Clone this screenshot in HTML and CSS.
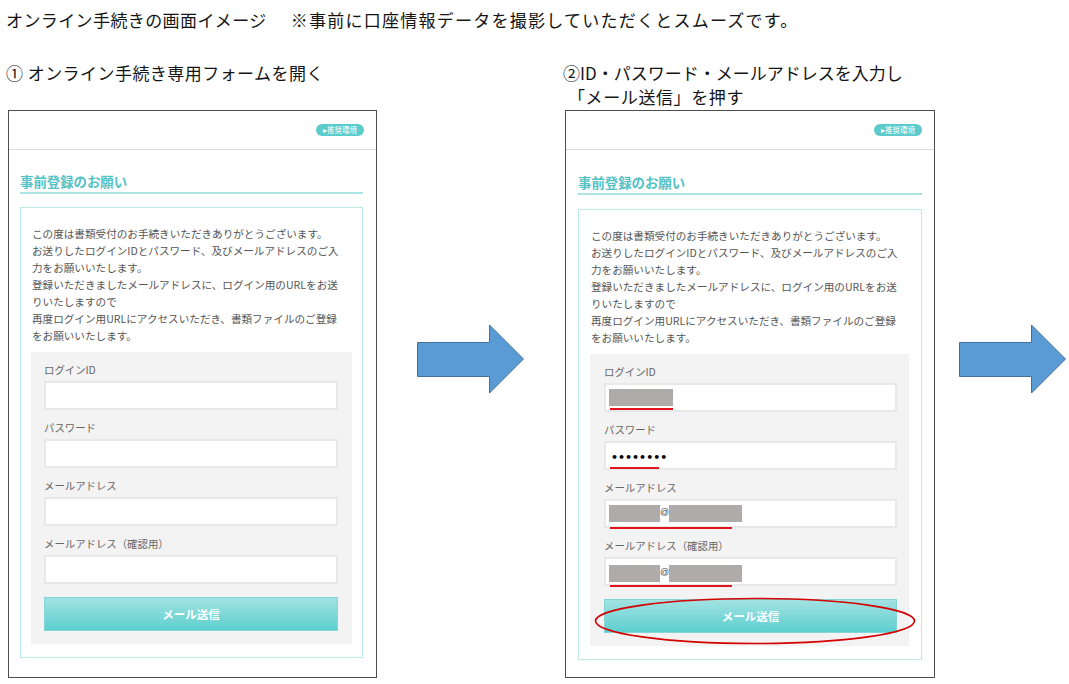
FILE: index.html
```html
<!DOCTYPE html>
<html lang="ja">
<head>
<meta charset="utf-8">
<title>オンライン手続きの画面イメージ</title>
<link rel="stylesheet" href="styles.css">
</head>
<body>
<p class="title"><span class="title-main">オンライン手続きの画面イメージ</span><span class="title-note">※事前に口座情報データを撮影していただくとスムーズです。</span></p>
<div class="steps">
  <section class="step step--one">
    <h2 class="step-head">① オンライン手続き専用フォームを開く</h2>
    <div class="phone">
      <div class="phone-bar"><span class="badge">▸推奨環境</span></div>
      <div class="phone-body">
        <h3 class="reg-title">事前登録のお願い</h3>
        <div class="reg-box">
          <p class="reg-text">この度は書類受付のお手続きいただきありがとうございます。<br>お送りしたログインIDとパスワード、及びメールアドレスのご入<br>力をお願いいたします。<br>登録いただきましたメールアドレスに、ログイン用のURLをお送<br>りいたしますので<br>再度ログイン用URLにアクセスいただき、書類ファイルのご登録<br>をお願いいたします。</p>
          <div class="form">
            <span class="f-label">ログインID</span>
            <div class="f-input"></div>
            <span class="f-label">パスワード</span>
            <div class="f-input"></div>
            <span class="f-label">メールアドレス</span>
            <div class="f-input"></div>
            <span class="f-label">メールアドレス（確認用）</span>
            <div class="f-input"></div>
            <div class="f-button">メール送信</div>
          </div>
        </div>
      </div>
    </div>
  </section>

  <div class="arrow arrow--one">
    <svg width="108" height="70" viewBox="0 0 108 70"><path d="M0.5 18.5 H72.5 V1 L106.5 35 L72.5 69 V52.5 H0.5 Z" fill="#5b9bd5" stroke="#41719c" stroke-width="1"/></svg>
  </div>

  <section class="step step--two">
    <h2 class="step-head">②ID・パスワード・メールアドレスを入力し<br><span class="step-sub">「メール送信」を押す</span></h2>
    <div class="phone phone--wide">
      <div class="phone-bar"><span class="badge">▸推奨環境</span></div>
      <div class="phone-body">
        <h3 class="reg-title">事前登録のお願い</h3>
        <div class="reg-box">
          <p class="reg-text">この度は書類受付のお手続きいただきありがとうございます。<br>お送りしたログインIDとパスワード、及びメールアドレスのご入<br>力をお願いいたします。<br>登録いただきましたメールアドレスに、ログイン用のURLをお送<br>りいたしますので<br>再度ログイン用URLにアクセスいただき、書類ファイルのご登録<br>をお願いいたします。</p>
          <div class="form">
            <span class="f-label">ログインID</span>
            <div class="f-input f-input--filled">
              <span class="mask mask--id"></span>
              <span class="mark mark--id"></span>
            </div>
            <span class="f-label">パスワード</span>
            <div class="f-input f-input--filled">
              <span class="dots">••••••••</span>
              <span class="mark mark--pw"></span>
            </div>
            <span class="f-label">メールアドレス</span>
            <div class="f-input f-input--filled">
              <span class="mask mask--user"></span><span class="at">@</span><span class="mask mask--domain"></span>
              <span class="mark mark--mail"></span>
            </div>
            <span class="f-label">メールアドレス（確認用）</span>
            <div class="f-input f-input--filled f-input--low">
              <span class="mask mask--user"></span><span class="at">@</span><span class="mask mask--domain"></span>
              <span class="mark mark--mail"></span>
            </div>
            <div class="f-button">メール送信
              <svg class="ring" width="322" height="48" viewBox="0 0 322 48"><ellipse cx="161" cy="24" rx="159.5" ry="22.5" fill="none" stroke="#d40000" stroke-width="1.6"/></svg>
            </div>
          </div>
        </div>
      </div>
    </div>
  </section>

  <div class="arrow arrow--two">
    <svg width="108" height="70" viewBox="0 0 108 70"><path d="M0.5 18.5 H72.5 V1 L106.5 35 L72.5 69 V52.5 H0.5 Z" fill="#5b9bd5" stroke="#41719c" stroke-width="1"/></svg>
  </div>
</div>
</body>
</html>
```

FILE: styles.css
```css
html, body {
  background: #ffffff;
}

body {
  margin: 0;
  padding: 8px 0 0 6px;
  font-family: "Noto Sans CJK JP", "Noto Sans", sans-serif;
  color: #141414;
}

.title {
  margin: 0 0 29px;
  font-size: 17px;
  line-height: 24px;
  white-space: nowrap;
}

.title-main {
  letter-spacing: 0.4px;
}

.title-note {
  margin-left: 24px;
  letter-spacing: 1.25px;
}

.steps {
  display: flex;
  align-items: flex-start;
}

.step {
  flex: none;
}

.step--one {
  width: 371px;
}

.step--two {
  width: 372px;
}

.step-head {
  margin: 0 0 1px;
  height: 48px;
  font-size: 17px;
  line-height: 24px;
  font-weight: 400;
  white-space: nowrap;
}

.step--one .step-head {
  letter-spacing: 0.45px;
}

.step-sub {
  margin-left: 5px;
  letter-spacing: 0.6px;
}

.arrow {
  flex: none;
  margin-top: 263px;
  line-height: 0;
}

.arrow--one {
  margin-left: 40px;
  margin-right: 38px;
}

.arrow--two {
  margin-left: 24px;
}

/* phone screenshot */
.phone {
  margin-left: 2px;
  width: 369px;
  box-sizing: border-box;
  border: 1px solid #4d4d4d;
  padding-bottom: 19px;
  background: #fff;
}

.phone--wide {
  width: 370px;
  padding-bottom: 17px;
}

.phone-bar {
  height: 38px;
  border-bottom: 1px solid #dcdcdc;
  display: flex;
  align-items: center;
  justify-content: flex-end;
  padding-right: 12px;
}

.badge {
  width: 48px;
  height: 12px;
  border-radius: 6px;
  background: #5ccbcb;
  color: #fff;
  font-size: 7.5px;
  line-height: 12px;
  text-align: center;
}

.phone-body {
  padding-left: 11px;
}

.phone--wide .phone-body {
  padding-left: 12px;
}

.reg-title {
  width: 343px;
  margin: 0;
  padding: 22px 0 2px;
  font-size: 13.4px;
  line-height: 18px;
  font-weight: 700;
  color: #55c2c6;
  border-bottom: 2px solid #aee3e4;
}

.phone--wide .reg-title {
  width: 344px;
  padding-top: 23px;
}

.reg-box {
  width: 343px;
  box-sizing: border-box;
  margin-top: 13px;
  border: 1px solid #bfe8e9;
  padding: 17px 10px 13px;
}

.phone--wide .reg-box {
  width: 344px;
  margin-top: 14px;
  padding: 17px 12px 13px 11px;
}

.reg-text {
  margin: 0 0 8px 1px;
  font-size: 10.6px;
  line-height: 17px;
  color: #555;
  white-space: nowrap;
}

.form {
  background: #f3f3f3;
  padding: 10px 14px 13px 13px;
}

.phone--wide .form {
  padding: 10px 12px 13px 14px;
}

.f-label {
  display: block;
  margin-bottom: 3px;
  font-size: 10.4px;
  line-height: 16px;
  color: #666;
}

.f-input {
  position: relative;
  height: 29px;
  box-sizing: border-box;
  border: 2px solid #e8e8e8;
  background: #fff;
  margin-bottom: 10px;
}

.f-input--filled {
  display: flex;
  align-items: flex-start;
  padding: 4px 0 0 3px;
}

.f-input--low {
  padding-top: 6px;
}

.mask {
  display: block;
  height: 17px;
  background: #afabaa;
}

.mask--id {
  width: 64px;
}

.mask--user {
  width: 51px;
}

.mask--domain {
  width: 73px;
}

.at {
  width: 9px;
  font-family: "Liberation Sans", sans-serif;
  font-size: 9px;
  line-height: 15px;
  color: #444;
  text-align: center;
}

.dots {
  font-family: "DejaVu Sans", sans-serif;
  font-size: 11px;
  line-height: 21px;
  font-weight: 700;
  color: #000;
  padding-left: 2px;
}

/* red annotation underlines */
.mark {
  position: absolute;
  left: 4px;
  height: 2px;
  background: #e0141a;
}

.mark--id {
  top: 23px;
  width: 63px;
}

.mark--pw {
  top: 24px;
  width: 49px;
}

.mark--mail {
  top: 26px;
  width: 122px;
}

.f-button {
  position: relative;
  margin-top: 13px;
  height: 34px;
  box-sizing: border-box;
  border: 1px solid #84d6d6;
  background: linear-gradient(#a2e2e2, #5dcfcf);
  color: #fff;
  font-weight: 700;
  font-size: 11.5px;
  display: flex;
  align-items: center;
  justify-content: center;
}

.ring {
  position: absolute;
  left: -11px;
  top: -3px;
  overflow: visible;
}
```
